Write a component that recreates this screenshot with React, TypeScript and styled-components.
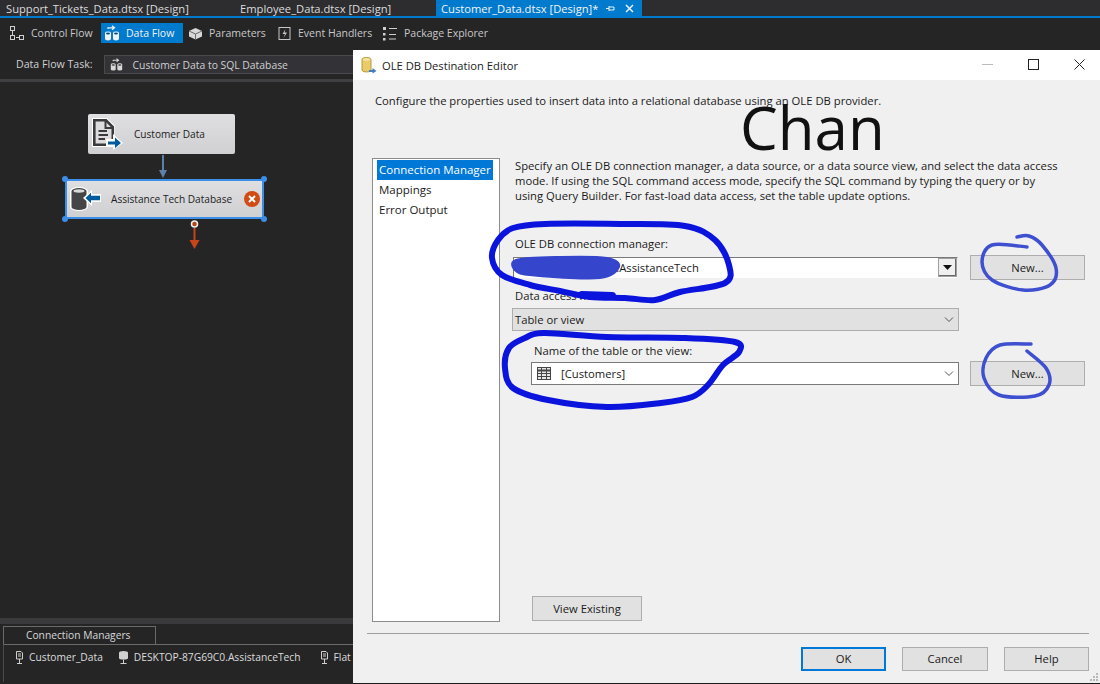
import React from "react";
import styled, { createGlobalStyle } from "styled-components";

const ui = `"Open Sans", "Noto Sans", "Liberation Sans", sans-serif`;

const Global = createGlobalStyle`
  html, body { margin: 0; padding: 0; background: #252526; }
  body { width: 1100px; height: 684px; overflow: hidden; font-family: ${ui}; }
  * { box-sizing: border-box; }
`;

const Screen = styled.div`
  position: relative;
  width: 1100px;
  height: 684px;
  display: flex;
  flex-direction: column;
  background: #252526;
  overflow: hidden;
`;

/* ---------- IDE behind the dialog ---------- */

const TabBar = styled.div`
  height: 18px;
  flex: none;
  display: flex;
  background: #2d2d30;
  border-bottom: 2px solid #007acc;
  color: #e0e0e0;
  font-size: 11.2px;
  line-height: 15px;
`;

const DocTab = styled.div<{ $active?: boolean; $w: number; $pad: number }>`
  width: ${(p) => p.$w}px;
  padding-left: ${(p) => p.$pad}px;
  height: 16px;
  background: ${(p) => (p.$active ? "#007acc" : "transparent")};
  color: ${(p) => (p.$active ? "#f4f4f4" : "#dcdcdc")};
  display: flex;
  align-items: center;
  white-space: nowrap;
`;

const TabGlyphs = styled.span`
  margin-left: 8px;
  display: flex;
  align-items: center;
  gap: 10px;
`;

const Toolbar = styled.div`
  height: 28px;
  flex: none;
  padding: 5px 0 0 7px;
  display: flex;
  gap: 3px;
  background: #252526;
`;

const DesignerTab = styled.div<{ $active?: boolean; $w: number }>`
  width: ${(p) => p.$w}px;
  height: 20px;
  display: flex;
  align-items: center;
  gap: 6px;
  padding-left: ${(p) => (p.$active ? 3 : 2)}px;
  color: ${(p) => (p.$active ? "#f2f2f2" : "#c8c8c8")};
  background: ${(p) => (p.$active ? "#007acc" : "transparent")};
  font-size: 10.5px;
  white-space: nowrap;
`;

const TaskRow = styled.div`
  height: 34px;
  flex: none;
  padding: 9px 0 0 16px;
  display: flex;
  align-items: flex-start;
  gap: 11px;
  color: #d0d0d0;
`;

const TaskLabel = styled.span`
  font-size: 10.6px;
  line-height: 19px;
`;

const TaskSelect = styled.div`
  width: 260px;
  height: 19px;
  border: 1px solid #4a4a4d;
  background: #333337;
  display: flex;
  align-items: center;
  gap: 10px;
  padding-left: 5px;
  font-size: 10.35px;
  white-space: nowrap;
`;

const Splitter = styled.div`
  height: 3px;
  flex: none;
  margin-top: -1px;
  background: #3f3f42;
`;

const Canvas = styled.div`
  position: relative;
  flex: 1;
  background: #252526;
`;

const Node = styled.div<{ $x: number; $y: number; $w: number; $h: number; $selected?: boolean }>`
  position: absolute;
  left: ${(p) => p.$x}px;
  top: ${(p) => p.$y}px;
  width: ${(p) => p.$w}px;
  height: ${(p) => p.$h}px;
  border-radius: 2px;
  background: linear-gradient(#dfdfe1, #d0d0d3);
  border: ${(p) => (p.$selected ? "2px solid #3b8fe8" : "0")};
  display: flex;
  align-items: center;
  color: #1c1c1c;
  font-size: 10.1px;
  white-space: nowrap;
`;

const NodeName = styled.span<{ $left: number }>`
  position: absolute;
  left: ${(p) => p.$left}px;
`;

const NodeGlyph = styled.svg<{ $x: number; $y: number }>`
  position: absolute;
  left: ${(p) => p.$x}px;
  top: ${(p) => p.$y}px;
`;

const Handle = styled.i<{ $x: number; $y: number }>`
  position: absolute;
  left: ${(p) => p.$x}px;
  top: ${(p) => p.$y}px;
  width: 6px;
  height: 6px;
  border-radius: 50%;
  background: #3b8fe8;
`;

const Wire = styled.svg`
  position: absolute;
  left: 0;
  top: 0;
  pointer-events: none;
`;

const BottomPanel = styled.div`
  height: 66px;
  flex: none;
  background: #252526;
  border-top: 6px solid #3a3a3d;
  padding: 2px 0 0 3px;
  color: #dcdcdc;
  font-size: 10.25px;
`;

const PanelTab = styled.div`
  width: 153px;
  height: 18px;
  border: 1px solid #6a6a6a;
  border-bottom: 0;
  padding-left: 22px;
  line-height: 17px;
  color: #d8d8d8;
`;

const PanelBody = styled.div`
  height: 38px;
  border-top: 1px solid #6a6a6a;
  border-left: 1px solid #4a4a4a;
  padding: 4px 0 0 11px;
  display: flex;
  gap: 15px;
  white-space: nowrap;
`;

const Conn = styled.span<{ $ml?: number }>`
  display: flex;
  align-items: center;
  gap: 5px;
  height: 16px;
  margin-left: ${(p) => p.$ml ?? 0}px;
`;

/* ---------- dialog ---------- */

const Dialog = styled.div`
  position: absolute;
  left: 353px;
  top: 50px;
  width: 747px;
  height: 634px;
  background: #f0f0f0;
  color: #1a1a1a;
  font-size: 11.25px;
  display: flex;
  flex-direction: column;
  border-bottom: 1px solid #1a1a1a;
`;

const TitleBar = styled.div`
  height: 30px;
  flex: none;
  background: #fff;
  display: flex;
  align-items: center;
  padding-left: 8px;
  gap: 5px;
  font-size: 11.2px;
  color: #222;
`;

const TitleText = styled.span`
  flex: 1;
`;

const WinButton = styled.div`
  width: 46px;
  height: 30px;
  margin-left: -5px;
  padding-bottom: 2px;
  display: flex;
  align-items: center;
  justify-content: center;
  &:last-child {
    margin-right: -2px;
  }
`;

const Intro = styled.div`
  height: 78px;
  flex: none;
  padding: 13px 0 0 22px;
  line-height: 16px;
`;

const Big = styled.div`
  position: absolute;
  left: 387px;
  top: 37px;
  font-size: 60px;
  line-height: 80px;
  color: #111;
  font-weight: 400;
`;

const Main = styled.div`
  flex: 1;
  display: flex;
  padding: 0 0 3px 19px;
  min-height: 0;
`;

const ListBox = styled.div`
  width: 128px;
  height: 464px;
  flex: none;
  border: 1px solid #8c8c8c;
  background: #fff;
  padding: 1px 6px 1px 4px;
  font-size: 11.5px;
  line-height: 20px;
`;

const ListItem = styled.div<{ $active?: boolean }>`
  height: 20px;
  padding-left: 2px;
  white-space: nowrap;
  overflow: hidden;
  background: ${(p) => (p.$active ? "#0078d7" : "transparent")};
  color: ${(p) => (p.$active ? "#fff" : "#1a1a1a")};
`;

const Panel = styled.div`
  flex: 1;
  padding: 0 0 0 15px;
  display: flex;
  flex-direction: column;
`;

const Help = styled.p`
  margin: 0;
  width: 548px;
  line-height: 15px;
`;

const FieldLabel = styled.div<{ $mt: number; $ml?: number }>`
  margin-top: ${(p) => p.$mt}px;
  margin-left: ${(p) => p.$ml ?? 0}px;
  line-height: 16px;
`;

const FieldRow = styled.div<{ $mt: number }>`
  margin-top: ${(p) => p.$mt}px;
  display: flex;
  align-items: center;
  justify-content: space-between;
  width: 570px;
`;

const Combo = styled.div<{ $w: number; $h: number; $ml?: number; $pl?: number; $sunken?: boolean; $gray?: boolean }>`
  width: ${(p) => p.$w}px;
  height: ${(p) => p.$h}px;
  margin-left: ${(p) => p.$ml ?? 0}px;
  background: ${(p) => (p.$gray ? "#e1e1e1" : "#fff")};
  border: 1px solid #7a7a7a;
  border-color: ${(p) => (p.$sunken ? "#7a7a7a #f0f0f0 #f0f0f0 #7a7a7a" : p.$gray ? "#adadad" : "#7a7a7a")};
  display: flex;
  align-items: center;
  padding-left: ${(p) => p.$pl ?? 2}px;
  flex: none;
`;

const ComboText = styled.span<{ $ml?: number }>`
  flex: 1;
  margin-left: ${(p) => p.$ml ?? 0}px;
  white-space: nowrap;
`;

const DropArrow = styled.span`
  width: 19px;
  height: 19px;
  background: #f0f0f0;
  border: 1px solid #a0a0a0;
  box-shadow: inset -1px -1px 0 #696969;
  display: flex;
  align-items: center;
  justify-content: center;
`;

const Chevron = styled.svg`
  margin-right: 4px;
`;

const PushButton = styled.button<{ $primary?: boolean; $w?: number; $h?: number }>`
  width: ${(p) => p.$w ?? 115}px;
  height: ${(p) => p.$h ?? 25}px;
  border: ${(p) => (p.$primary ? "2px solid #0078d7" : "1px solid #adadad")};
  background: #e1e1e1;
  font: inherit;
  color: #1a1a1a;
  padding: 0 0 1px;
  flex: none;
`;

const ExistingRow = styled.div`
  margin-top: auto;
  padding-left: 17px;
`;

const Footer = styled.div`
  flex: none;
  margin: 9px 11px 0 14px;
  height: 50px;
  display: flex;
  justify-content: flex-end;
  align-items: flex-start;
  gap: 16px;
  padding-top: 13px;
  border-top: 1px solid #a0a0a0;
`;

const Grip = styled.svg`
  position: absolute;
  right: 1px;
  bottom: 1px;
`;

const Scribble = styled.svg`
  position: absolute;
  left: 0;
  top: 0;
  pointer-events: none;
`;

/* ---------- small drawings ---------- */

const ControlFlowIcon = () => (
  <svg width="16" height="15" viewBox="0 0 16 15" fill="none" stroke="#cfcfcf">
    <rect x="1.500" y="0.500" width="4" height="4" />
    <rect x="1.500" y="9.500" width="4" height="4" />
    <rect x="10.500" y="9.500" width="4" height="4" />
    <path d="M3.500 5V9M7 11.500H10" />
  </svg>
);

const DataFlowIcon = ({ size = 16, color = "#f0f0f0", rim = "#004d85" }: { size?: number; color?: string; rim?: string }) => (
  <svg width={size} height={size} viewBox="0 0 16 16">
    <path d="M1 8a3 1.400 0 0 1 6 0V14a3 1.400 0 0 1-6 0Z" fill={color} />
    <path d="M9 8a3 1.400 0 0 1 6 0V14a3 1.400 0 0 1-6 0Z" fill={color} />
    <ellipse cx="4" cy="8.500" rx="2" ry="0.900" fill={rim} />
    <ellipse cx="12" cy="8.500" rx="2" ry="0.900" fill={rim} />
    <path d="M4 4V2.800H10M8 0.800L10.500 2.800L8 4.800" stroke={color} strokeWidth="1.300" fill="none" />
  </svg>
);

const ParamIcon = () => (
  <svg width="15" height="15" viewBox="0 0 15 15">
    <path d="M7.500 2L14 5V10.500L7.500 13.500L1 10.500V5Z" fill="#d8d8d8" />
    <path d="M1 5L7.500 8L14 5M7.500 8V13.500" stroke="#6a6a6a" fill="none" />
  </svg>
);

const EventIcon = () => (
  <svg width="15" height="15" viewBox="0 0 15 15" fill="none">
    <rect x="2" y="1.500" width="11" height="12" stroke="#c8c8c8" />
    <path d="M8.500 3L5.500 8H8L6.500 12L10 6.500H7.500Z" fill="#c8c8c8" />
  </svg>
);

const TreeIcon = () => (
  <svg width="16" height="15" viewBox="0 0 16 15" fill="#cfcfcf">
    <rect x="1" y="1" width="3" height="3" />
    <rect x="1" y="7" width="2.500" height="2.500" />
    <rect x="1" y="12" width="2.500" height="2.500" />
    <rect x="7" y="2" width="8" height="1" />
    <rect x="7" y="8" width="7" height="1" />
    <rect x="7" y="12.500" width="7" height="1" />
  </svg>
);

const PinIcon = () => (
  <svg width="9" height="9" viewBox="0 0 9 9" stroke="#e8f3fb" fill="none">
    <path d="M0 4.500H3M3 2V7M3 3H8M3 6H8M8 3V6" />
  </svg>
);

const CloseIcon = () => (
  <svg width="9" height="9" viewBox="0 0 9 9" stroke="#e8f3fb" strokeWidth="1.500">
    <path d="M1 1L8 8M8 1L1 8" />
  </svg>
);

const PlugIcon = () => (
  <svg width="9" height="15" viewBox="0 0 9 15" fill="none" stroke="#d0d0d0">
    <path d="M1.500 1.500H6L7.500 3V9H1.500Z" />
    <path d="M3 4H6M3 6H6M4.500 9V13M2 13.500H7" />
  </svg>
);

const DbPlugIcon = () => (
  <svg width="11" height="15" viewBox="0 0 11 15">
    <path d="M1 2.500a4.500 1.600 0 0 1 9 0V8a4.500 1.600 0 0 1-9 0Z" fill="#d0d0d0" />
    <path d="M5.500 9.500V13M2.500 13.500H8.500" stroke="#d0d0d0" fill="none" />
  </svg>
);

const SourceGlyph = () => (
  <NodeGlyph $x={4} $y={4} width="31" height="32" viewBox="0 0 31 32">
    <path d="M0 0H15L23 8V29H0Z" fill="#fff" />
    <path d="M2.300 2.300H14L20.800 9V26.700H2.300Z" fill="#dcdcde" stroke="#3a3a3c" strokeWidth="2.600" />
    <path d="M13.500 3V10H20.500" fill="none" stroke="#3a3a3c" strokeWidth="2" />
    <path d="M6.500 13H15M6.500 17H16M6.500 21H13" stroke="#3a3a3c" strokeWidth="2" />
    <path d="M14 21H21V16L31 25L21 32V29H14Z" fill="#fff" />
    <path d="M16 23.500H23V19.500L29 25L23 30V26.500H16Z" fill="#005a9e" />
  </NodeGlyph>
);

const DestGlyph = () => (
  <NodeGlyph $x={3} $y={6} width="31" height="24" viewBox="0 0 31 24">
    <path d="M0 4a9 4 0 0 1 18 0V20a9 4 0 0 1-18 0Z" fill="#fff" />
    <path d="M1.500 4a7.500 3 0 0 1 15 0V20a7.500 3 0 0 1-15 0Z" fill="#454547" />
    <ellipse cx="9" cy="4" rx="5.500" ry="1.700" fill="#d8d8d8" />
    <path d="M13 11L22 3V7H31V15H22V19Z" fill="#fff" />
    <path d="M15.500 11L21 5.800V8.800H30V13.200H21V16.200Z" fill="#005a9e" />
  </NodeGlyph>
);

const ErrorBadge = styled.svg`
  position: absolute;
  right: 2px;
  top: 10px;
`;

const FolderDb = () => (
  <svg width="16" height="17" viewBox="0 0 16 17">
    <path d="M1 2.500a4.500 2 0 0 1 9 0V13a4.500 2 0 0 1-9 0Z" fill="#e9cb6a" stroke="#b99a3a" />
    <ellipse cx="5.500" cy="2.500" rx="3.500" ry="1.200" fill="#f6e6a8" />
    <path d="M8 13H11.500V11L15.500 14L11.500 16.500V15H8Z" fill="#3f7fc0" />
  </svg>
);

const TableIcon = () => (
  <svg width="14" height="13" viewBox="0 0 14 13" fill="none" stroke="#444">
    <rect x="0.500" y="0.500" width="13" height="12" fill="#e6e6e6" />
    <path d="M0.500 3.500H13.500" strokeWidth="2" />
    <path d="M0.500 6.500H13.500M0.500 9.500H13.500M4.500 1V12.500M9.500 1V12.500" />
  </svg>
);

const ChevronDown = () => (
  <Chevron width="10" height="6" viewBox="0 0 10 6" fill="none" stroke="#555">
    <path d="M1 0.500L5 4.500L9 0.500" />
  </Chevron>
);

// hand drawn strokes: runs a smooth line through the points
const smooth = (pts: number[][], closed = false) => {
  const at = (i: number) =>
    closed ? pts[(i + pts.length) % pts.length] : pts[Math.max(0, Math.min(pts.length - 1, i))];
  let d = `M${pts[0][0]} ${pts[0][1]}`;
  const last = closed ? pts.length : pts.length - 1;
  for (let i = 0; i < last; i++) {
    const [p0, p1, p2, p3] = [at(i - 1), at(i), at(i + 1), at(i + 2)];
    const c1 = [p1[0] + (p2[0] - p0[0]) / 6, p1[1] + (p2[1] - p0[1]) / 6];
    const c2 = [p2[0] - (p3[0] - p1[0]) / 6, p2[1] - (p3[1] - p1[1]) / 6];
    d += `C${c1[0]} ${c1[1]} ${c2[0]} ${c2[1]} ${p2[0]} ${p2[1]}`;
  }
  return closed ? d + "Z" : d;
};

const loopTop = [
  [545, 224], [620, 224], [685, 226], [715, 240], [729, 265], [725, 283], [680, 292], [655, 300],
  [625, 298], [590, 297], [560, 291], [530, 285], [502, 275], [492, 258], [498, 240], [513, 228],
];
const loopBottom = [
  [544, 333], [607, 337], [685, 338], [735, 342], [739, 352], [723, 365], [708, 385], [692, 397],
  [661, 403], [607, 407], [548, 400], [513, 388], [505, 368], [509, 348], [525, 338],
];
const blob = [[516, 260], [560, 257], [607, 258], [619, 267], [600, 278], [540, 276], [517, 272]];
const circleTop = [
  [1027, 247], [992, 245], [982, 262], [992, 280], [1023, 290], [1050, 285], [1056, 268], [1042, 245], [1029, 236], [1017, 237],
];
const circleBottom = [
  [1031, 344], [1000, 345], [986, 358], [984, 378], [999, 395], [1035, 396], [1049, 385], [1046, 368], [1027, 351],
];

const App = () => {
  return (
    <Screen>
      <Global />
      <TabBar>
        <DocTab $w={238} $pad={6}>Support_Tickets_Data.dtsx [Design]</DocTab>
        <DocTab $w={198} $pad={2}>Employee_Data.dtsx [Design]</DocTab>
        <DocTab $active $w={206} $pad={5}>
          Customer_Data.dtsx [Design]*
          <TabGlyphs>
            <PinIcon />
            <CloseIcon />
          </TabGlyphs>
        </DocTab>
      </TabBar>
      <Toolbar>
        <DesignerTab $w={91}><ControlFlowIcon /> Control Flow</DesignerTab>
        <DesignerTab $active $w={82}><DataFlowIcon /> Data Flow</DesignerTab>
        <DesignerTab $w={86}><ParamIcon /> Parameters</DesignerTab>
        <DesignerTab $w={102}><EventIcon /> Event Handlers</DesignerTab>
        <DesignerTab $w={120}><TreeIcon /> Package Explorer</DesignerTab>
      </Toolbar>
      <TaskRow>
        <TaskLabel>Data Flow Task:</TaskLabel>
        <TaskSelect>
          <DataFlowIcon size={13} color="#d8d8d8" rim="#333337" />
          Customer Data to SQL Database
        </TaskSelect>
      </TaskRow>
      <Splitter />
      <Canvas>
        <Node $x={88} $y={32} $w={147} $h={40}>
          <SourceGlyph />
          <NodeName $left={46}>Customer Data</NodeName>
        </Node>
        <Node $x={65} $y={97} $w={199} $h={40} $selected>
          <DestGlyph />
          <NodeName $left={44}>Assistance Tech Database</NodeName>
          <ErrorBadge width="16" height="16" viewBox="0 0 16 16">
            <circle cx="8" cy="8" r="8" fill="#d24a14" />
            <path d="M5 5L11 11M11 5L5 11" stroke="#fff" strokeWidth="2" />
          </ErrorBadge>
        </Node>
        <Handle $x={62} $y={94} />
        <Handle $x={261} $y={94} />
        <Handle $x={62} $y={134} />
        <Handle $x={261} $y={134} />
        <Wire width="300" height="200">
          <path d="M163 73V90" stroke="#5f7fab" strokeWidth="2" fill="none" />
          <path d="M159 88H167L163 96Z" fill="#5f7fab" />
          <circle cx="194.500" cy="142" r="3" fill="#b5441c" stroke="#eee" strokeWidth="1.500" />
          <path d="M194.500 146V159" stroke="#c8441a" strokeWidth="2" fill="none" />
          <path d="M189.500 158H199.500L194.500 167Z" fill="#c8441a" />
        </Wire>
      </Canvas>
      <BottomPanel>
        <PanelTab>Connection Managers</PanelTab>
        <PanelBody>
          <Conn><PlugIcon /> Customer_Data</Conn>
          <Conn><DbPlugIcon /> DESKTOP-87G69C0.AssistanceTech</Conn>
          <Conn $ml={4}><PlugIcon /> Flat File Connection</Conn>
        </PanelBody>
      </BottomPanel>

      <Dialog>
        <TitleBar>
          <FolderDb />
          <TitleText>OLE DB Destination Editor</TitleText>
          <WinButton>
            <svg width="11" height="11" viewBox="0 0 11 11"><path d="M0 5.500H11" stroke="#bbb" /></svg>
          </WinButton>
          <WinButton>
            <svg width="11" height="11" viewBox="0 0 11 11"><rect x="0.500" y="0.500" width="10" height="10" fill="none" stroke="#222" /></svg>
          </WinButton>
          <WinButton>
            <svg width="11" height="11" viewBox="0 0 11 11"><path d="M0.500 0.500L10.500 10.500M10.500 0.500L0.500 10.500" stroke="#222" /></svg>
          </WinButton>
        </TitleBar>
        <Intro>Configure the properties used to insert data into a relational database using an OLE DB provider.</Intro>
        <Big>Chan</Big>
        <Main>
          <ListBox>
            <ListItem $active>Connection Manager</ListItem>
            <ListItem>Mappings</ListItem>
            <ListItem>Error Output</ListItem>
          </ListBox>
          <Panel>
            <Help>
              Specify an OLE DB connection manager, a data source, or a data source view, and select the data access mode. If using the SQL command access mode, specify the SQL command by typing the query or by using Query Builder. For fast-load data access, set the table update options.
            </Help>
            <FieldLabel $mt={33}>OLE DB connection manager:</FieldLabel>
            <FieldRow $mt={3}>
              <Combo $w={445} $h={22} $ml={-2} $sunken>
                <ComboText>DESKTOP-87G69C0.AssistanceTech</ComboText>
                <DropArrow>
                  <svg width="9" height="5" viewBox="0 0 9 5"><path d="M0 0H9L4.500 5Z" fill="#111" /></svg>
                </DropArrow>
              </Combo>
              <PushButton>New...</PushButton>
            </FieldRow>
            <FieldLabel $mt={8}>Data access mode:</FieldLabel>
            <FieldRow $mt={4}>
              <Combo $w={447} $h={23} $ml={-3} $gray>
                <ComboText>Table or view</ComboText>
                <ChevronDown />
              </Combo>
            </FieldRow>
            <FieldLabel $mt={12} $ml={19}>Name of the table or the view:</FieldLabel>
            <FieldRow $mt={2}>
              <Combo $w={428} $h={23} $ml={16} $pl={5}>
                <TableIcon />
                <ComboText $ml={10}>[Customers]</ComboText>
                <ChevronDown />
              </Combo>
              <PushButton>New...</PushButton>
            </FieldRow>
            <ExistingRow>
              <PushButton $w={110} $h={25}>View Existing</PushButton>
            </ExistingRow>
          </Panel>
        </Main>
        <Footer>
          <PushButton $primary $w={85} $h={24}>OK</PushButton>
          <PushButton $w={86} $h={24}>Cancel</PushButton>
          <PushButton $w={85} $h={24}>Help</PushButton>
        </Footer>
        <Grip width="10" height="10" viewBox="0 0 10 10" fill="#b8b8b8">
          <rect x="7" y="1" width="2" height="2" />
          <rect x="4" y="4" width="2" height="2" />
          <rect x="7" y="4" width="2" height="2" />
          <rect x="1" y="7" width="2" height="2" />
          <rect x="4" y="7" width="2" height="2" />
          <rect x="7" y="7" width="2" height="2" />
        </Grip>
      </Dialog>

      <Scribble width="1100" height="684" viewBox="0 0 1100 684" fill="none" strokeLinecap="round" strokeLinejoin="round">
        <path d={smooth(blob, true)} fill="#3545cc" stroke="#3545cc" strokeWidth="2" />
        <path d={smooth(loopTop, true)} stroke="#0a14dc" strokeWidth="6" />
        <path d="M582 295L612 296" stroke="#0a14dc" strokeWidth="8" />
        <path d={smooth(loopBottom, true)} stroke="#0a14dc" strokeWidth="6" />
        <path d={smooth(circleTop)} stroke="#3e4fd0" strokeWidth="3.500" />
        <path d={smooth(circleBottom)} stroke="#3e4fd0" strokeWidth="3.500" />
      </Scribble>
    </Screen>
  );
};

export default App;
